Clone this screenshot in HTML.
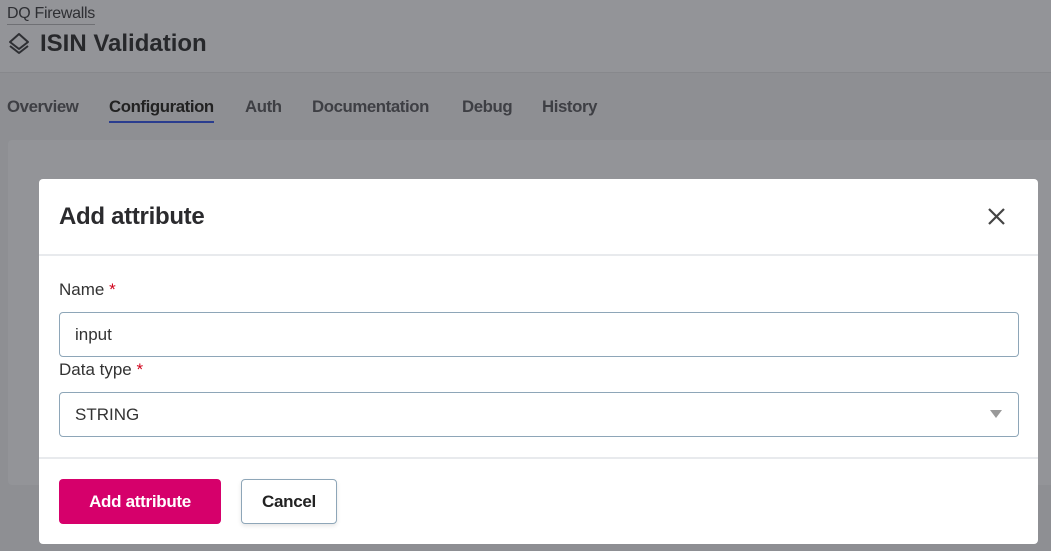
<!DOCTYPE html>
<html><head><meta charset="utf-8"><style>
*{box-sizing:border-box;margin:0;padding:0}
body{width:1051px;height:551px;overflow:hidden;background:#8e8f93;font-family:"Liberation Sans",sans-serif;position:relative}
.hdr{position:absolute;left:0;top:0;width:1051px;height:73px;background:#939498;border-bottom:1px solid #87888c}
.bc{position:absolute;left:7px;top:5px;font-size:16px;color:#2e2f33;border-bottom:1px solid #6f7074;padding-bottom:1px;letter-spacing:-0.3px}
.title{position:absolute;left:7px;top:30px;font-size:24px;font-weight:bold;color:#27282b;display:flex;align-items:center;gap:9px}
.tabs div{position:absolute;top:97px;font-size:16.8px;font-weight:bold;color:#3e3f44;letter-spacing:-0.4px;white-space:nowrap}
.tabs .a{color:#222;border-bottom:2px solid #2a3d8f;padding-bottom:4px}
.card{position:absolute;left:8px;top:140px;width:1060px;height:345px;background:#939498;border-radius:4px}
.modal{position:absolute;left:39px;top:179px;width:999px;height:365px;background:#fff;border-radius:4px}
.mh{height:77px;border-bottom:2px solid #e8eaed;position:relative}
.mh h2{position:absolute;left:20px;top:24px;font-size:24px;font-weight:bold;color:#2b2b2e;letter-spacing:-0.3px}
.x{position:absolute;right:32px;top:28px}
.lbl{position:absolute;left:20px;font-size:17px;color:#333}
.lbl span{color:#d0021b}
.inp{position:absolute;left:20px;width:960px;height:45px;border:1px solid #8ea6b8;border-radius:4px;font-size:17px;color:#333;padding:12px 15px}
.ft{position:absolute;left:0;top:278px;width:100%;border-top:2px solid #e8eaed}
.b1{position:absolute;left:20px;top:300px;width:162px;height:45px;background:#d6006b;border-radius:4px;color:#fff;font-weight:bold;font-size:17px;text-align:center;line-height:45px;letter-spacing:-0.3px}
.b2{position:absolute;left:202px;top:300px;width:96px;height:45px;border:1px solid #8ea6b8;border-radius:4px;color:#222;font-weight:bold;font-size:17px;text-align:center;line-height:43px;box-shadow:0 2px 4px rgba(0,0,0,.1);letter-spacing:-0.3px}
</style></head><body>
<div class="hdr">
<div class="bc">DQ Firewalls</div>
<div class="title"><svg width="24" height="24" viewBox="0 0 24 24" fill="none" stroke="#2e2f33" stroke-width="2" stroke-linejoin="round"><path d="M12 2 L21 10 L12 17 L3 10 Z"/><path d="M3 14 L12 21 L21 14"/></svg>ISIN Validation</div>
</div>
<div class="tabs"><div style="left:7px">Overview</div><div class="a" style="left:109px">Configuration</div><div style="left:245px">Auth</div><div style="left:312px">Documentation</div><div style="left:462px">Debug</div><div style="left:542px">History</div></div>
<div class="card"></div>
<div class="modal">
<div class="mh"><h2>Add attribute</h2>
<svg class="x" width="19" height="19" viewBox="0 0 19 19" stroke="#444" stroke-width="2.2"><path d="M2 2L17 17M17 2L2 17"/></svg></div>
<div class="lbl" style="top:101px">Name <span>*</span></div>
<div class="inp" style="top:133px">input</div>
<div class="lbl" style="top:181px">Data type <span>*</span></div>
<div class="inp" style="top:213px">STRING<svg style="position:absolute;right:16px;top:17px" width="12" height="9" viewBox="0 0 12 9"><path d="M0 0H12L6 8Z" fill="#999"/></svg></div>
<div class="ft"></div>
<div class="b1">Add attribute</div>
<div class="b2">Cancel</div>
</div>
</body></html>
